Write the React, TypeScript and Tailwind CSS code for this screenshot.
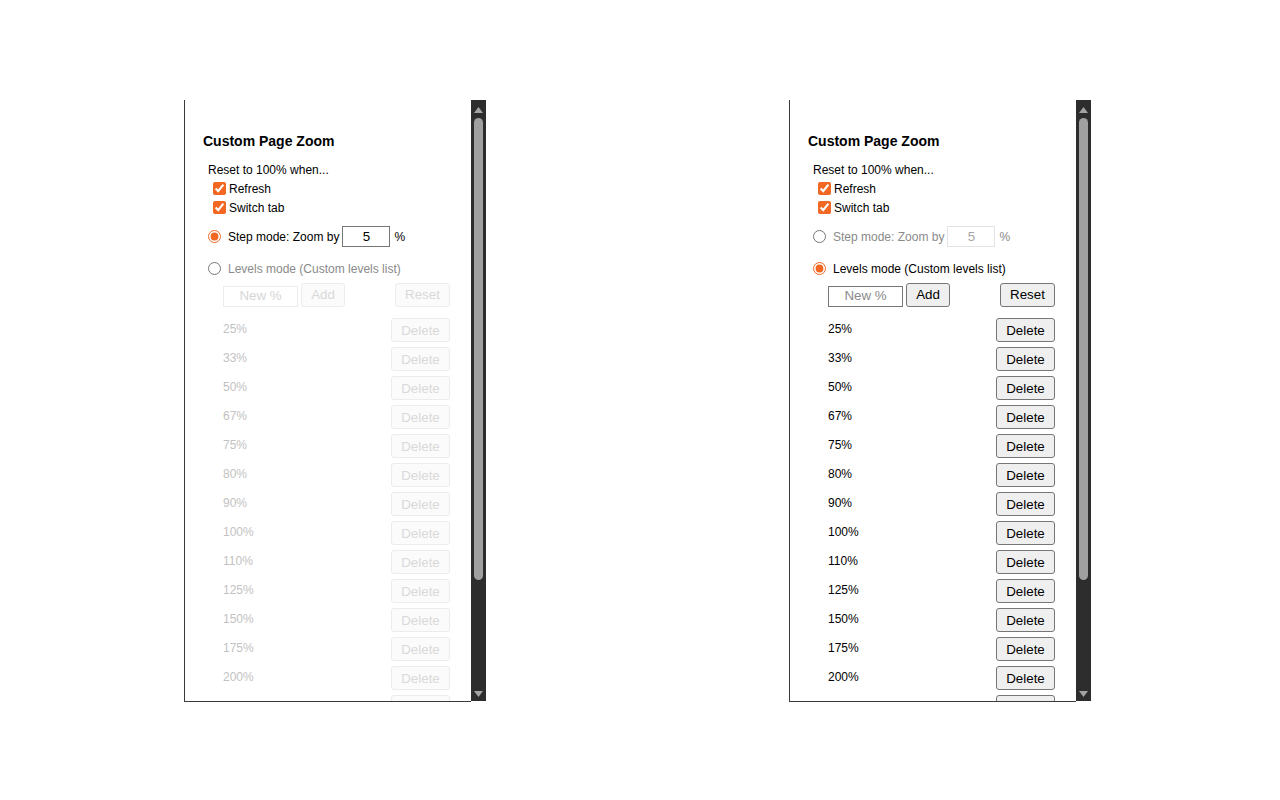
import React from "react";

const LEVELS = ["25%", "33%", "50%", "67%", "75%", "80%", "90%", "100%", "110%", "125%", "150%", "175%", "200%", "250%", "300%"];

function Scrollbar() {
  return (
    <div className="w-[15px] h-[601px] bg-[#2d2d2d] flex flex-col items-center shrink-0">
      <svg width="9" height="6" viewBox="0 0 9 6" className="mt-[7px]">
        <polygon points="4.5,0 9,6 0,6" fill="#a3a3a3" />
      </svg>
      <div className="mt-[5px] w-[9px] h-[462px] rounded-[4.5px] bg-[#a0a0a0]" />
      <div className="flex-1" />
      <svg width="9" height="6" viewBox="0 0 9 6" className="mb-[4px]">
        <polygon points="0,0 9,0 4.5,6" fill="#a3a3a3" />
      </svg>
    </div>
  );
}

function Panel({ levels }: { levels: boolean }) {
  const stepOn = !levels;
  const btnOn = "bg-[#efefef] border border-[#767676] text-black";
  const btnOff = "bg-[#fbfbfb] border border-[#ececec] text-[#d9d9d9]";
  const btn = levels ? btnOn : btnOff;
  return (
    <div className="flex">
      <div className="w-[287px] h-[602px] border-l border-b border-[#3a3a3a] overflow-hidden pt-[33px] pl-[18px] font-['Liberation_Sans',Arial,sans-serif]">
        <div className="text-[14px] leading-[17px] font-bold text-black">Custom Page Zoom</div>
        <div className="ml-[5px] mt-[13px]">
          <div className="text-[12px] leading-[14px] text-black">Reset to 100% when...</div>
          <div className="mt-[2px]">
            <label className="flex items-center h-[19px] pl-[5px] text-[12px] text-black">
              <input type="checkbox" defaultChecked className="m-0 w-[13px] h-[13px] accent-[#f26722]" />
              <span className="ml-[3px]">Refresh</span>
            </label>
            <label className="flex items-center h-[19px] pl-[5px] text-[12px] text-black">
              <input type="checkbox" defaultChecked className="m-0 w-[13px] h-[13px] accent-[#f26722]" />
              <span className="ml-[3px]">Switch tab</span>
            </label>
          </div>
          <div className={`flex items-center h-[21px] mt-[9px] text-[12px] ${stepOn ? "text-black" : "text-[#8a8a8a]"}`}>
            <input type="radio" name={levels ? "r2" : "r1"} defaultChecked={stepOn} className="m-0 w-[13px] h-[13px] accent-[#f26722]" />
            <span className="ml-[7px]">Step mode: Zoom by</span>
            <input
              type="text"
              defaultValue="5"
              disabled={!stepOn}
              className={`ml-[3px] w-[48px] h-[21px] text-center text-[13.33px] outline-none ${
                stepOn ? "border border-[#767676] text-black bg-white" : "border border-[#e3e3e3] text-[#a5a5a5] bg-white"
              }`}
            />
            <span className="ml-[4px]">%</span>
          </div>
          <div className={`flex items-center h-[21px] mt-[11px] text-[12px] ${levels ? "text-black" : "text-[#8a8a8a]"}`}>
            <input type="radio" name={levels ? "r2b" : "r1b"} defaultChecked={levels} className="m-0 w-[13px] h-[13px] accent-[#f26722]" />
            <span className="ml-[7px]">Levels mode (Custom levels list)</span>
          </div>
          <div className="ml-[15px] mt-[4px] w-[227px] flex items-end">
            <input
              type="text"
              placeholder="New %"
              disabled={!levels}
              className={`w-[75px] h-[21px] pb-[2px] text-center text-[13.33px] outline-none bg-white ${
                levels ? "border border-[#767676] placeholder:text-[#8a8a8a]" : "border border-[#ececec] placeholder:text-[#d6d6d6]"
              }`}
            />
            <button className={`ml-[3px] w-[44px] h-[24px] rounded-[3px] text-[13.33px] ${btn}`}>Add</button>
            <button className={`ml-auto w-[55px] h-[24px] rounded-[3px] text-[13.33px] ${btn}`}>Reset</button>
          </div>
          <div className="ml-[15px] mt-[11px] w-[227px] flex flex-col gap-[5px]">
            {LEVELS.map((l) => (
              <div key={l} className="flex items-center justify-between h-[24px]">
                <span className={`mb-[2px] text-[12px] ${levels ? "text-black" : "text-[#c2c2c2]"}`}>{l}</span>
                <button className={`w-[59px] h-[24px] pt-[2px] rounded-[3px] text-[13.33px] ${btn}`}>Delete</button>
              </div>
            ))}
          </div>
        </div>
      </div>
      <Scrollbar />
    </div>
  );
}

export default function App() {
  return (
    <div className="w-[1280px] h-[800px] bg-white flex pl-[184px] pt-[100px] gap-[303px]">
      <Panel levels={false} />
      <Panel levels={true} />
    </div>
  );
}
